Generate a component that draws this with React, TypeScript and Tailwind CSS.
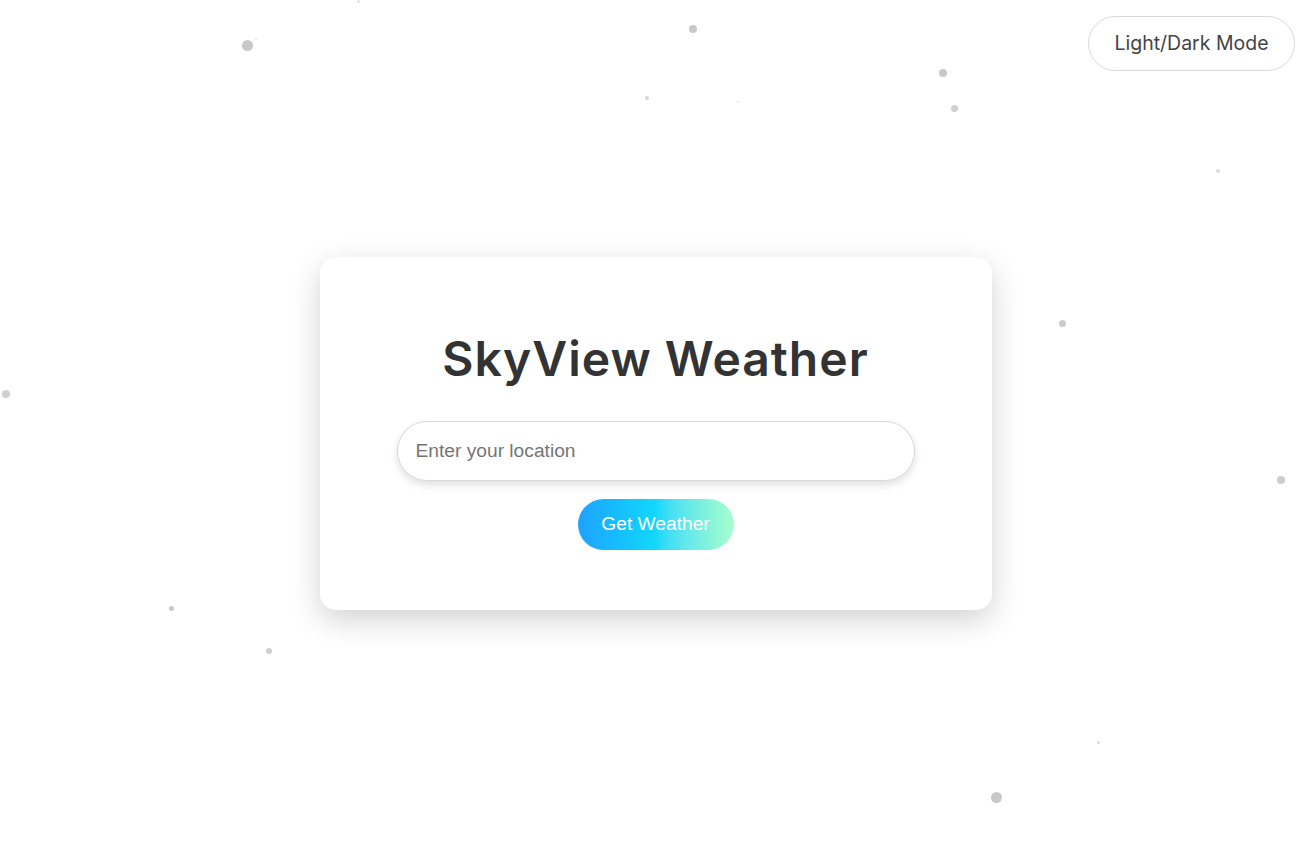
import React, { useState } from "react";

// decorative floating dots in the background
const dots = [
  { x: 247, y: 45, r: 5.5, c: "#c8c8c8" },
  { x: 256, y: 39, r: 1, c: "#e6e6e6" },
  { x: 358, y: 1, r: 1.5, c: "#e0e0e0" },
  { x: 693, y: 29, r: 4, c: "#c8c8c8" },
  { x: 647, y: 98, r: 2, c: "#d4d4d4" },
  { x: 738, y: 102, r: 1, c: "#e6e6e6" },
  { x: 943, y: 73, r: 4, c: "#c8c8c8" },
  { x: 954, y: 108, r: 3.5, c: "#cfcfcf" },
  { x: 1218, y: 171, r: 2, c: "#dcdcdc" },
  { x: 1062, y: 323, r: 3.5, c: "#cccccc" },
  { x: 6, y: 394, r: 4, c: "#d0d0d0" },
  { x: 1281, y: 480, r: 4, c: "#cccccc" },
  { x: 171, y: 608, r: 2.5, c: "#c8c8c8" },
  { x: 269, y: 651, r: 3, c: "#cfcfcf" },
  { x: 466, y: 600, r: 4, c: "#ececec" },
  { x: 996, y: 797, r: 5.5, c: "#c8c8c8" },
  { x: 1098, y: 742, r: 1.5, c: "#d8d8d8" },
];

export default function App() {
  const [location, setLocation] = useState("");

  return (
    <div className="relative min-h-screen overflow-hidden bg-white flex items-center justify-center pt-[11px] pr-[2px]">
      {/* background particles */}
      {dots.map((d, i) => (
        <span
          key={i}
          className="absolute rounded-full pointer-events-none"
          style={{
            left: d.x - d.r,
            top: d.y - d.r,
            width: d.r * 2,
            height: d.r * 2,
            background: d.c,
          }}
        />
      ))}

      <button className="absolute top-[16px] right-[18px] h-[55px] w-[207px] rounded-full border border-[#d9d9d9] bg-white text-[19.5px] text-[#444] font-['Inter',sans-serif]">
        Light/Dark Mode
      </button>

      <div className="relative z-10 w-[672px] h-[353px] bg-white rounded-2xl shadow-[0_10px_30px_rgba(0,0,0,0.18)] flex flex-col items-center pt-[72px]">
        <h1 className="text-[48px] leading-[60px] font-semibold text-[#333] tracking-[1px] font-['Inter',sans-serif]">
          SkyView Weather
        </h1>
        <input
          type="text"
          value={location}
          onChange={(e) => setLocation(e.target.value)}
          placeholder="Enter your location"
          className="mt-[32px] w-[518px] h-[60px] rounded-full border border-[#d9d9d9] bg-white px-[18px] text-[19.2px] text-[#333] placeholder-[#757575] shadow-[0_4px_8px_rgba(0,0,0,0.12)] outline-none font-['Liberation_Sans',Arial,sans-serif]"
        />
        <button className="mt-[18px] w-[156px] h-[51px] rounded-full bg-gradient-to-r from-[#1fa2ff] via-[#12d8fa] to-[#a6ffcb] text-white text-[19.2px] font-['Liberation_Sans',Arial,sans-serif]">
          Get Weather
        </button>
      </div>
    </div>
  );
}
